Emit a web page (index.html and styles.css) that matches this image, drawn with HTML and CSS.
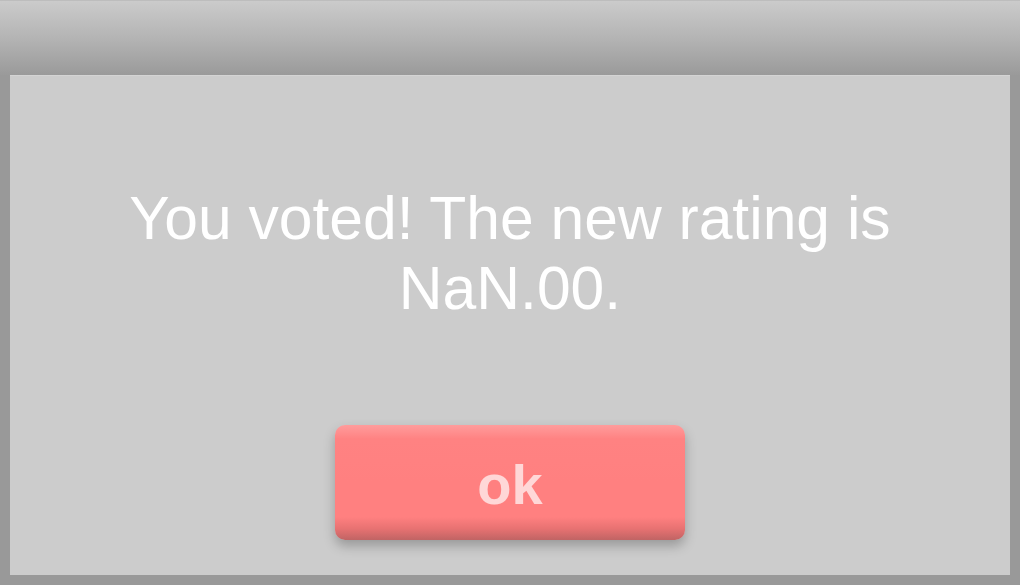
FILE: index.html
```html
<!DOCTYPE html>
<html>
<head>
<meta charset="utf-8">
<link rel="stylesheet" href="styles.css">
</head>
<body>
<div class="header"></div>
<div class="frame">
  <div class="panel">
    <p class="message">You voted! The new rating is NaN.00.</p>
    <button class="ok">ok</button>
  </div>
</div>
</body>
</html>
```
FILE: styles.css
```css
html, body {
  margin: 0;
  padding: 0;
  width: 1020px;
  height: 585px;
  overflow: hidden;
  background: #999999;
  font-family: "Liberation Sans", Arial, sans-serif;
}
.header {
  height: 75px;
  background: linear-gradient(to bottom, #cbcbcb 0%, #b4b4b4 50%, #9a9a9a 100%);
  border-top: 1px solid #bdbdbd;
  box-sizing: border-box;
}
.frame {
  padding: 0 10px 10px 10px;
  height: 510px;
  box-sizing: border-box;
}
.panel {
  height: 500px;
  background: #cccccc;
  border-top: 1px solid #d4d4d4;
  box-sizing: border-box;
  display: flex;
  flex-direction: column;
  align-items: center;
}
.message {
  margin: 107px 0 0 0;
  width: 800px;
  text-align: center;
  color: #ffffff;
  font-size: 60.6px;
  line-height: 70px;
}
.ok {
  margin-top: 102px;
  width: 350px;
  height: 115px;
  border: none;
  border-radius: 10px;
  background: linear-gradient(to bottom, #ff9c9c 0px, #ff8282 14px, #ff8080 50%, #ff8080 80%, #e87272 90%, #c06464 100%);
  box-shadow: 0 6px 12px rgba(0, 0, 0, 0.25);
  color: #ffd7d7;
  font-family: "Liberation Sans", Arial, sans-serif;
  font-weight: bold;
  font-size: 56px;
  padding: 4px 0 0 0;
}
```
